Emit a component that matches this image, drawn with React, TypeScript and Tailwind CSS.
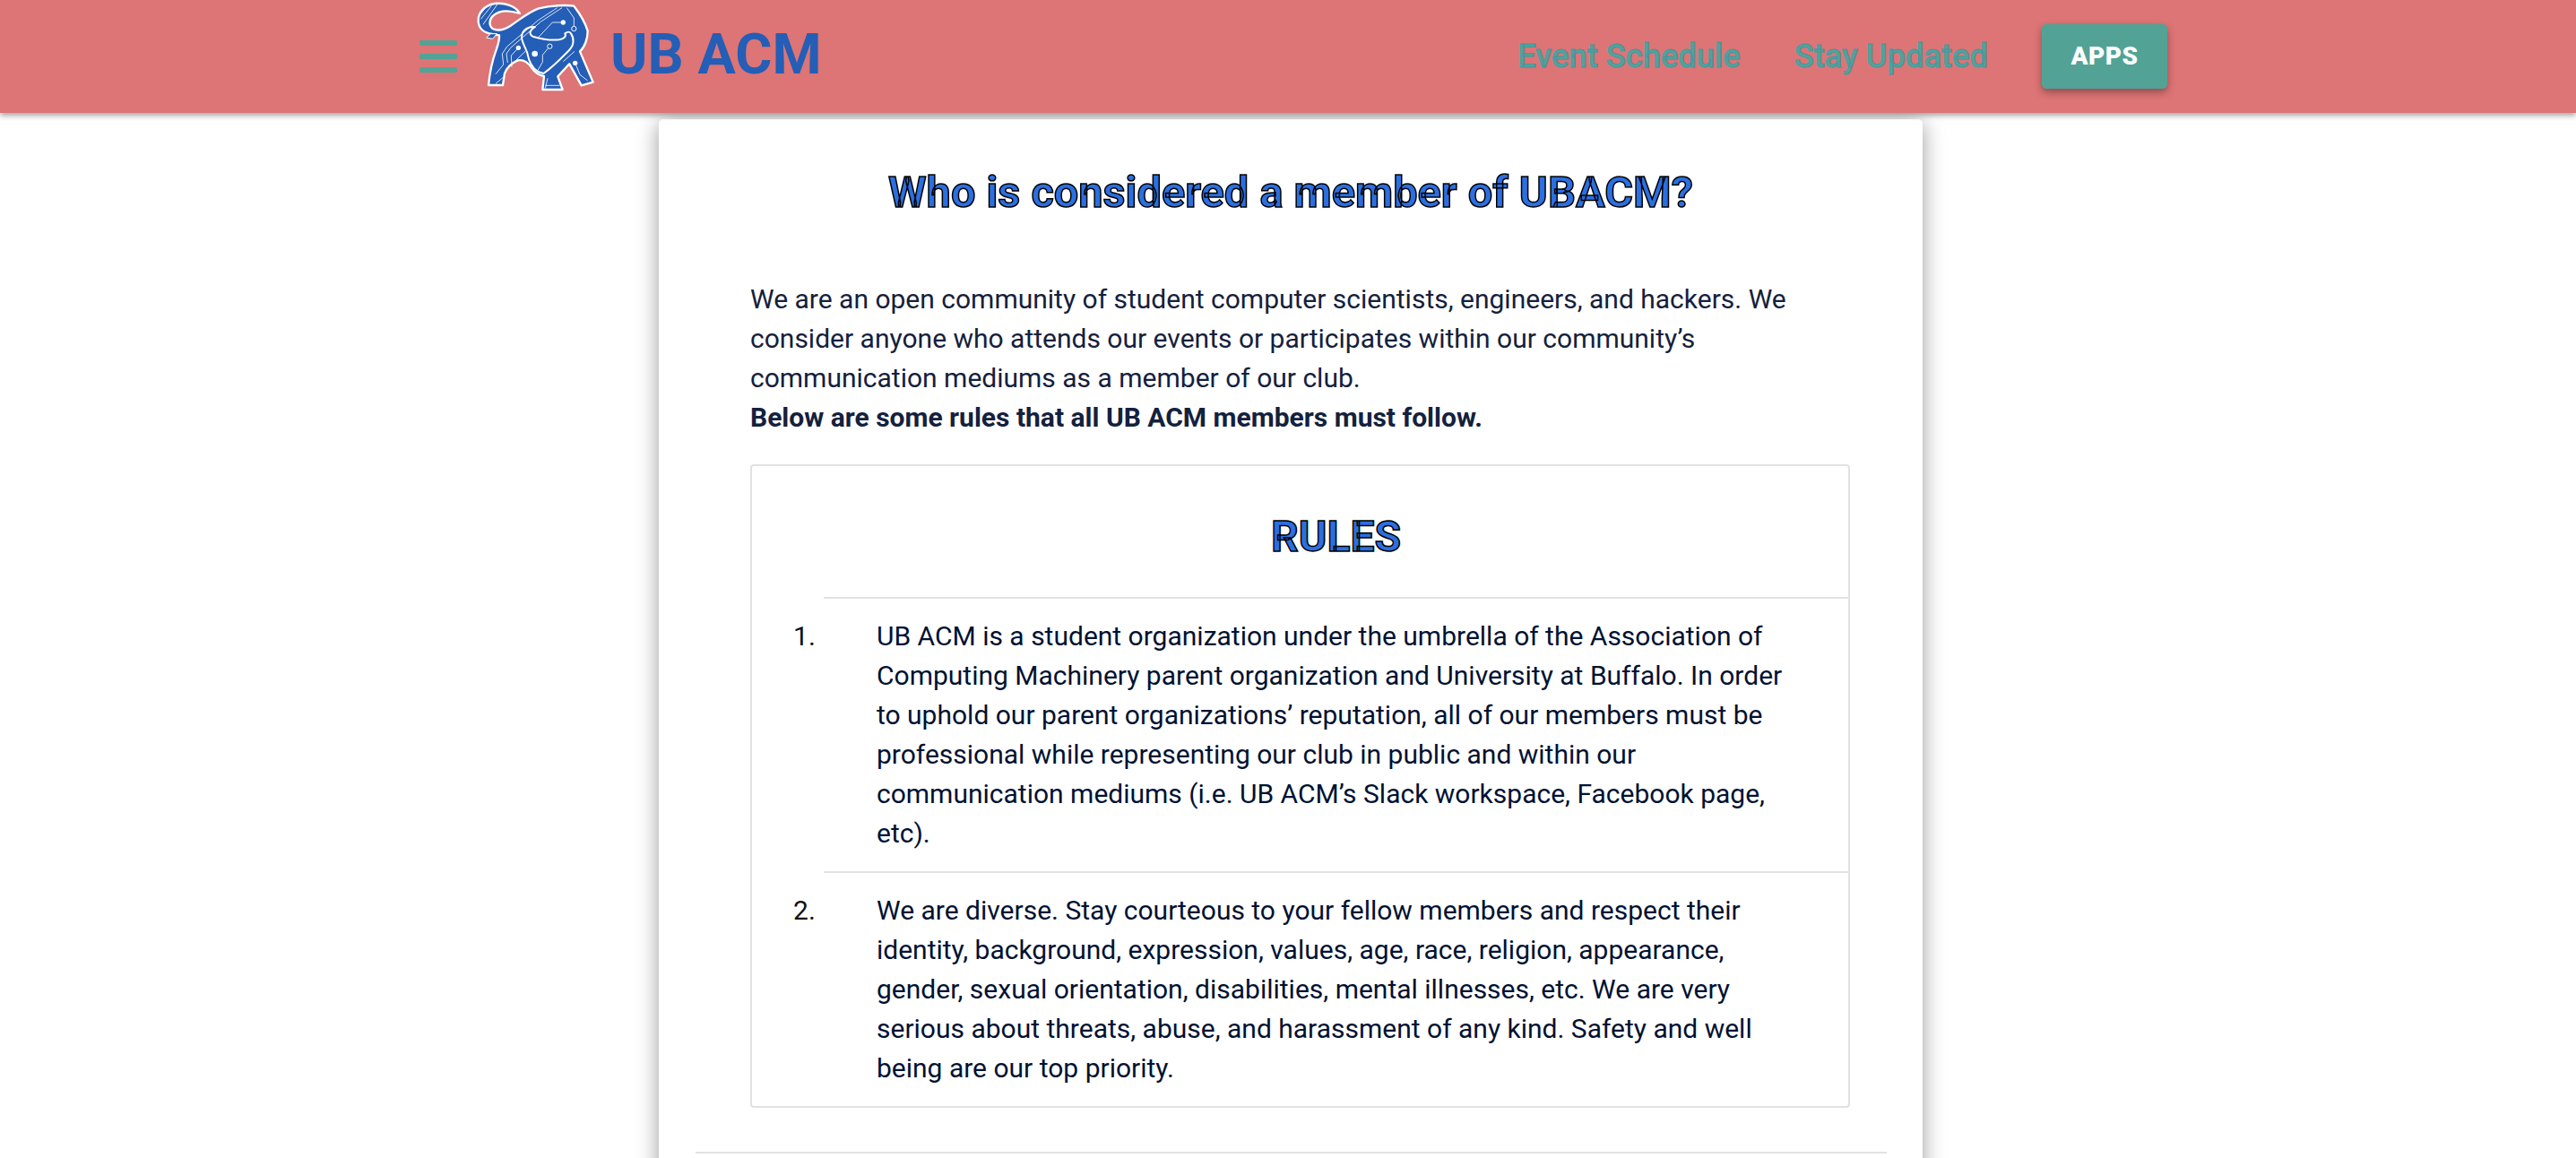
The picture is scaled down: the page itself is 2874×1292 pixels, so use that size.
const rules = [
  "UB ACM is a student organization under the umbrella of the Association of Computing Machinery parent organization and University at Buffalo. In order to uphold our parent organizations’ reputation, all of our members must be professional while representing our club in public and within our communication mediums (i.e. UB ACM’s Slack workspace, Facebook page, etc).",
  "We are diverse. Stay courteous to your fellow members and respect their identity, background, expression, values, age, race, religion, appearance, gender, sexual orientation, disabilities, mental illnesses, etc. We are very serious about threats, abuse, and harassment of any kind. Safety and well being are our top priority.",
]

function BullLogo() {
  return (
    <svg className="h-[105px] w-[145px] shrink-0" viewBox="0 0 435 315">
      {/* Silhouette */}
      <path
        d="M165 45C150 20 115 8 80 12C45 18 24 45 26 72C28 96 46 110 72 114L96 118C98 135 92 150 84 172C72 205 64 245 60 285L108 285L114 246C120 228 138 210 158 202C178 198 192 208 204 226C216 244 232 252 246 255L241 300L308 300L292 256C304 244 318 226 331 214L371 286L410 275L366 172C382 158 392 130 392 104C384 76 366 46 346 20C320 16 270 18 228 28C194 40 164 66 134 86C112 100 90 104 74 96C60 86 62 64 76 52C96 34 130 34 165 45Z"
        fill="#245eb6"
        stroke="#ffffff"
        strokeWidth="7"
        strokeLinejoin="round"
      />
      {/* Head outline, horn to horn */}
      <path
        d="M216 90C194 88 174 98 171 122C170 140 184 158 190 178C194 200 204 226 226 240L244 246C276 224 306 192 330 168C346 152 348 130 336 112C330 104 324 106 316 112C322 122 312 130 296 133C268 136 236 130 208 122C194 114 198 100 216 90Z"
        fill="#245eb6"
        stroke="#ffffff"
        strokeWidth="6"
        strokeLinejoin="round"
      />
      <path d="M53 126L68 113H88L74 130Z" fill="#245eb6" stroke="#ffffff" strokeWidth="3" strokeLinejoin="round" />
      {/* Circuit traces */}
      <g fill="none" stroke="#ffffff" strokeWidth="2.5">
        <path d="M310 75H274L226 126" />
        <path d="M306 26L236 72L134 160L120 180L124 210" />
        <path d="M290 26L226 68L122 156L106 180L110 216L84 248" />
        <path d="M160 160L136 186L138 224" />
        <path d="M185 170L150 204" />
        <path d="M322 26L346 60V88" />
        <path d="M265 155L241 184V208L222 240" />
        <path d="M348 172L310 206" />
        <path d="M338 226L372 284M350 210L366 250L392 270" />
        <path d="M34 64L70 20M42 82L90 14M32 48L52 24" />
        <path d="M84 280L108 260" />
        <path d="M250 286H298M258 262L250 296" />
      </g>
      <circle cx="310" cy="75" r="8" fill="#ffffff" />
      <circle cx="160" cy="160" r="8" fill="#ffffff" />
      <circle cx="215" cy="180" r="10" fill="#ffffff" />
      <circle cx="350" cy="211" r="8" fill="#ffffff" />
      <circle cx="346" cy="96" r="8" fill="#245eb6" stroke="#ffffff" strokeWidth="3" />
      <circle cx="265" cy="155" r="8" fill="#245eb6" stroke="#ffffff" strokeWidth="3" />
    </svg>
  )
}

export default function App() {
  return (
    <div className="h-[1292px] overflow-hidden bg-white font-['Roboto',sans-serif]">
      {/* Top bar */}
      <header className="relative z-10 flex h-[126px] items-center bg-[#dd7475] pl-[468px] pr-[456px] shadow-[0_3px_6px_rgba(0,0,0,0.35)]">
        <div className="flex w-[42px] flex-col gap-[9px]">
          <div className="h-[6px] rounded-[2px] bg-[#52a396]" />
          <div className="h-[6px] rounded-[2px] bg-[#52a396]" />
          <div className="h-[6px] rounded-[2px] bg-[#52a396]" />
        </div>
        <div className="ml-[15px] self-start">
          <BullLogo />
        </div>
        <span className="ml-[11px] -translate-y-[3px] text-[63px] leading-none font-bold text-[#245eb6]">UB ACM</span>
        <nav className="ml-auto flex items-center">
          <a className="text-[36.3px] font-medium text-[#52a396] [-webkit-text-stroke:0.8px_#4693a2]">Event Schedule</a>
          <a className="ml-[60px] text-[36.3px] font-medium text-[#52a396] [-webkit-text-stroke:0.8px_#4693a2]">Stay Updated</a>
          <button className="ml-[60px] h-[72px] w-[140px] rounded-[5px] bg-[#52a396] text-[28px] font-black tracking-[0.5px] text-white shadow-[0_4px_8px_rgba(0,0,0,0.35)]">
            APPS
          </button>
        </nav>
      </header>

      {/* Card */}
      <main className="ml-[735px] mt-[7px] w-[1410px] rounded-[5px] bg-white pt-[50px] shadow-[0_4px_24px_rgba(0,0,0,0.4)]">
        <h1 className="text-center text-[48.7px] leading-[64px] font-bold text-[#2b6fe0] [-webkit-text-stroke:1.5px_#000000]">
          Who is considered a member of UBACM?
        </h1>
        <div className="pl-[102px] pr-[81px] pt-[65px]">
          <p className="text-[30px] leading-[44px] text-[#14213d]">
            We are an open community of student computer scientists, engineers, and hackers. We consider anyone who attends our events or participates within our community’s communication mediums as a member of our club.
            <br />
            <strong className="font-bold">Below are some rules that all UB ACM members must follow.</strong>
          </p>

          {/* Rules box */}
          <section className="mt-[30px] rounded-[4px] border-2 border-[#e2e2e2] pl-[80px]">
            <h2 className="pt-[47px] pb-[35px] text-center text-[48px] leading-[64px] font-bold text-[#2b6fe0] [-webkit-text-stroke:1.5px_#000000]">
              RULES
            </h2>
            <ol>
              {rules.map((rule, i) => (
                <li key={i} className="flex border-t-2 border-[#e2e2e2] py-[20px] pr-[64px] text-[30px] leading-[44px] text-[#001233]">
                  <span className="-ml-[34px] w-[93px] shrink-0 text-[#111111]">{i + 1}.</span>
                  <span>{rule}</span>
                </li>
              ))}
            </ol>
          </section>

          <div className="-ml-[61px] -mr-[41px] mt-[49px] h-[2px] bg-[#e2e2e2]" />
        </div>
        <div className="h-[40px]" />
      </main>
    </div>
  )
}
